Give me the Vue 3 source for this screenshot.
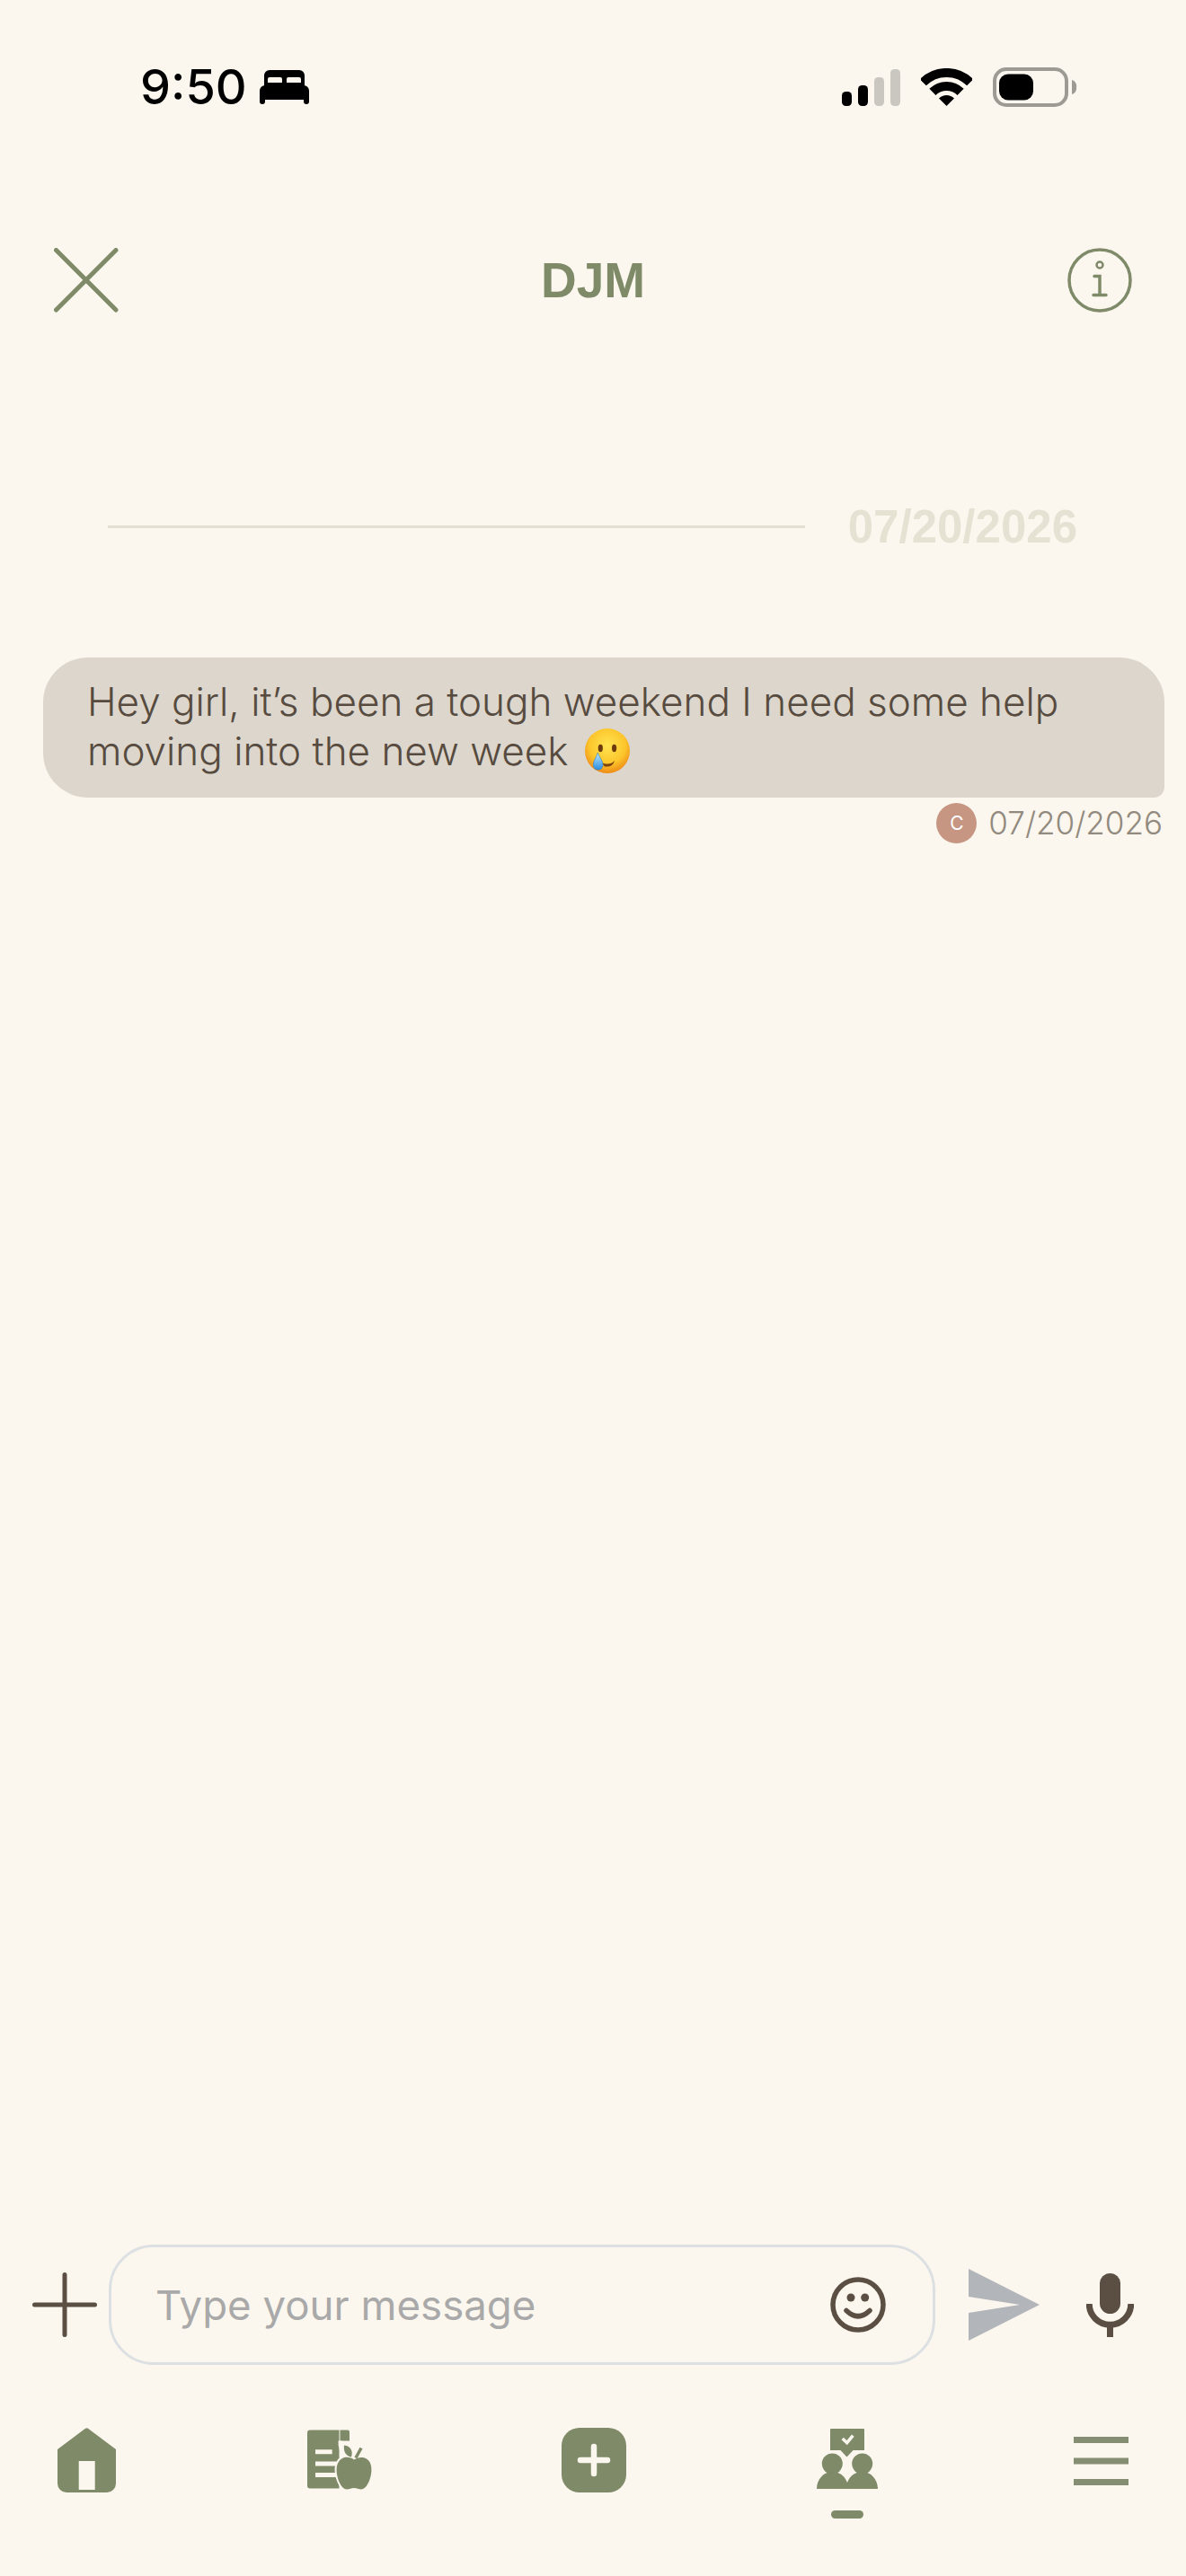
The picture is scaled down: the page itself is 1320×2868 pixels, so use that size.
<template>
  <div class="page">
    <div class="status">
      <div class="status-left">
        <span class="clock">9:50</span>
        <svg class="bed" width="55" height="38" viewBox="0 0 55 38">
          <path fill-rule="evenodd" d="M11 0H44a6 6 0 0 1 6 6V18H5V6a6 6 0 0 1 6-6ZM11 8a2 2 0 0 0-2 2v4H25V10a2 2 0 0 0-2-2ZM32 8a2 2 0 0 0-2 2v4H46V10a2 2 0 0 0-2-2Z" />
          <path d="M6 17H49a6 6 0 0 1 6 6V35a3 3 0 0 1-6 0V33H6v2a3 3 0 0 1-6 0V23a6 6 0 0 1 6-6Z" />
        </svg>
      </div>
      <div class="status-right">
        <svg width="65" height="42" viewBox="0 0 65 42">
          <rect x="0" y="26" width="11" height="16" rx="4.5" />
          <rect x="18" y="19" width="11" height="23" rx="4.5" />
          <rect x="36" y="10" width="11" height="32" rx="4.5" fill="#c9c7c0" />
          <rect x="54" y="1" width="11" height="41" rx="4.5" fill="#c9c7c0" />
        </svg>
        <svg width="57" height="43" viewBox="0 0 57 43">
          <path d="M2.3 15.8A37 37 0 0 1 54.7 15.8" fill="none" stroke="#000" stroke-width="10" />
          <path d="M12.9 26.4A22 22 0 0 1 44.1 26.4" fill="none" stroke="#000" stroke-width="10" />
          <path d="M28.5 42L20 33.5A12 12 0 0 1 37 33.5Z" />
        </svg>
        <svg class="battery" width="94" height="44" viewBox="0 0 94 44">
          <rect x="2" y="2" width="80" height="40" rx="13" fill="none" stroke="#9c9a92" stroke-width="4" />
          <rect x="7" y="7.5" width="38" height="29" rx="10" />
          <path d="M88 14a7 7 0 0 1 5 8 7 7 0 0 1-5 8Z" fill="#9c9a92" />
        </svg>
      </div>
    </div>

    <header class="header">
      <svg width="72" height="72" viewBox="0 0 72 72" fill="none" stroke="#7f8a69" stroke-width="5" stroke-linecap="round">
        <path d="M2.5 2.5L69 69M69 2.5L2.5 69" />
      </svg>
      <h1 class="title">DJM</h1>
      <svg width="72" height="72" viewBox="0 0 72 72" fill="none" stroke="#7f8a69" stroke-width="3.5">
        <circle cx="36" cy="36" r="34" />
        <circle cx="36" cy="19" r="3.5" stroke-width="2.5" />
        <path d="M30 31.5H36V52.5M29 52.5H43" stroke-linecap="round" />
      </svg>
    </header>

    <div class="date-row">
      <div class="date-line"></div>
      <span class="date-text">{{ date }}</span>
    </div>

    <main class="thread">
      <div class="bubble">
        {{ message }}
        <svg class="emoji" width="50" height="50" viewBox="0 0 50 50">
          <defs>
            <radialGradient id="face" cx="50%" cy="38%" r="62%">
              <stop offset="0" stop-color="#ffe552" />
              <stop offset="0.65" stop-color="#fcc52b" />
              <stop offset="1" stop-color="#ef8a16" />
            </radialGradient>
            <linearGradient id="tear" x1="0" y1="0" x2="0" y2="1">
              <stop offset="0" stop-color="#bfeaff" />
              <stop offset="1" stop-color="#2a8ee0" />
            </linearGradient>
          </defs>
          <circle cx="25" cy="25" r="25" fill="url(#face)" />
          <ellipse cx="17.3" cy="22" rx="2.6" ry="4.2" fill="#6e3c0c" />
          <ellipse cx="32.6" cy="22" rx="2.6" ry="4.2" fill="#6e3c0c" />
          <path d="M19 38.5Q28 41.5 33 36Q31 43.5 22 42.5Z" fill="#7a4310" />
          <path d="M14.3 27C12.5 33 9.3 35.5 9.3 41A5.4 5.8 0 0 0 20 41C20 35.5 16.2 33 14.3 27Z" fill="url(#tear)" stroke="#2a7fc9" stroke-width="0.6" />
        </svg>
      </div>
      <div class="meta">
        <span class="avatar">C</span>
        <span class="meta-date">{{ date }}</span>
      </div>
    </main>

    <div class="composer">
      <svg width="72" height="72" viewBox="0 0 72 72" fill="none" stroke="#5b4f43" stroke-width="5" stroke-linecap="round">
        <path d="M36 2.5V69.5M2.5 36H69.5" />
      </svg>
      <div class="input">
        <span class="placeholder">Type your message</span>
        <svg width="62" height="62" viewBox="0 0 62 62" fill="none" stroke="#5b4f43" stroke-width="5.5" stroke-linecap="round">
          <circle cx="31" cy="31" r="28" />
          <circle cx="23" cy="23" r="4.5" fill="#5b4f43" stroke="none" />
          <circle cx="38.7" cy="23" r="4.5" fill="#5b4f43" stroke="none" />
          <path d="M18 37.5Q31 50 44 37.5" />
        </svg>
      </div>
      <svg class="send" width="80" height="80" viewBox="0 0 80 80">
        <path d="M0 0L79 40L0 80V49L57 40L0 31Z" fill="#b2b5b9" />
      </svg>
      <svg class="mic" width="53" height="71" viewBox="0 0 53 71">
        <rect x="15" y="0" width="23" height="45" rx="11.5" fill="#5b4f43" />
        <path d="M3.25 34a23.25 23.25 0 0 0 46.5 0M26.5 57V71" fill="none" stroke="#5b4f43" stroke-width="7" />
      </svg>
    </div>

    <nav class="tabs">
      <div class="tab">
        <svg width="65" height="72" viewBox="0 0 65 72">
          <path d="M31 .8a2.5 2.5 0 0 1 3 0L65 24V62a10 10 0 0 1-10 10H10A10 10 0 0 1 0 62V24Z" fill="#7f8a69" />
          <rect x="23.7" y="37" width="18" height="32" fill="#fbf7ee" />
        </svg>
      </div>
      <div class="tab">
        <svg width="72" height="72" viewBox="0 0 72 67">
          <path d="M3 0H35.5V65H3a3 3 0 0 1-3-3V3a3 3 0 0 1 3-3Z" fill="#7f8a69" />
          <path d="M36.5 0H45a2 2 0 0 1 2 2V12H36.5Z" fill="#7f8a69" />
          <path d="M9 21.7H27.7V26.7H9ZM9 35H36V40H9ZM9 47.6H36V52.6H9Z" fill="#fbf7ee" />
          <path d="M36.5 12C36 20 39 26 44 30" fill="none" stroke="#fbf7ee" stroke-width="4" />
          <path d="M52 33C47 29 36 28 33 40C31 50 37 66 44 66C47 66 49 64.5 52 64.5C55 64.5 57 66 60 66C67 66 73 50 71 40C69 29 58 29 52 33Z" fill="#7f8a69" stroke="#fbf7ee" stroke-width="4" paint-order="stroke" />
          <path d="M41 17C49 18 51 24 49 30C43 29 40 24 41 17Z" fill="#7f8a69" />
          <path d="M60 20L54 31" stroke="#7f8a69" stroke-width="3.5" />
        </svg>
      </div>
      <div class="tab">
        <svg width="72" height="72" viewBox="0 0 72 72">
          <rect width="72" height="72" rx="20" fill="#7f8a69" />
          <path d="M36 21V51M21 36H51" stroke="#fbf7ee" stroke-width="6.5" stroke-linecap="round" />
        </svg>
      </div>
      <div class="tab active">
        <svg width="68" height="72" viewBox="0 0 68 72">
          <path d="M16 1H52a1 1 0 0 1 1 1V25H40.5L33.5 32.5L26.5 25H15V2a1 1 0 0 1 1-1Z" fill="#7f8a69" />
          <path d="M28.7 12L33.7 16.7L40.3 8.7" fill="none" stroke="#fbf7ee" stroke-width="3.5" />
          <circle cx="17.3" cy="40" r="11.5" fill="#7f8a69" />
          <circle cx="50.7" cy="40" r="11.5" fill="#7f8a69" />
          <path d="M0 68C0 57 8 49 17 49C25 49 31 53 34 61C37 53 43 49 51 49C60 49 68 57 68 68Z" fill="#7f8a69" />
        </svg>
        <span class="indicator"></span>
      </div>
      <div class="tab">
        <svg width="61" height="72" viewBox="0 0 61 72">
          <path d="M0 10H61V17H0ZM0 33.5H61V40.5H0ZM0 57H61V64H0Z" fill="#858e72" />
        </svg>
      </div>
    </nav>
  </div>
</template>

<script setup>
const date = '07/20/2026'
const message = 'Hey girl, it’s been a tough weekend I need some help moving into the new week'
</script>

<style>
html,
body {
  margin: 0;
  background: #fbf7ee;
}
</style>

<style scoped>
.page {
  display: flex;
  flex-direction: column;
  height: 2868px;
  background: #fbf7ee;
  font-family: Inter, "Liberation Sans", sans-serif;
  overflow: hidden;
}

svg {
  display: block;
  flex: none;
}

.status {
  display: flex;
  justify-content: space-between;
  align-items: center;
  height: 194px;
  padding: 0 121px 0 156px;
}

.status-left {
  display: flex;
  align-items: center;
  gap: 14px;
}

.clock {
  font-size: 54px;
  font-weight: 500;
  line-height: 60px;
  color: #000;
}

.status-right {
  display: flex;
  align-items: center;
  gap: 23px;
}

.header {
  display: flex;
  justify-content: space-between;
  align-items: center;
  height: 120px;
  margin-top: 58px;
  padding: 0 60px;
}

.title {
  margin: 0;
  font-family: "Liberation Sans", sans-serif;
  font-size: 55px;
  font-weight: 700;
  color: #7f8a69;
}

.date-row {
  display: flex;
  align-items: center;
  gap: 48px;
  height: 60px;
  margin-top: 184px;
  padding: 0 121px 0 120px;
}

.date-line {
  flex: 1;
  height: 3px;
  background: #e3dfd2;
}

.date-text {
  font-family: "Liberation Sans", sans-serif;
  font-size: 51px;
  font-weight: 700;
  color: #e6e2d3;
}

.thread {
  flex: 1;
  padding: 116px 24px 0 48px;
}

.bubble {
  padding: 22px 48px 24px 49px;
  border-radius: 50px 50px 12px 50px;
  background: #dcd6cc;
  font-size: 44px;
  font-weight: 350;
  line-height: 55px;
  color: #574b3f;
}

.emoji {
  display: inline-block;
  margin: -10px 0 -10px 6px;
  vertical-align: 1px;
}

.meta {
  display: flex;
  justify-content: flex-end;
  align-items: center;
  gap: 13px;
  margin-top: 6px;
  padding-right: 2px;
}

.avatar {
  display: flex;
  justify-content: center;
  align-items: center;
  width: 45px;
  height: 45px;
  border-radius: 50%;
  background: #c69682;
  font-size: 21px;
  color: #fff;
}

.meta-date {
  font-size: 35px;
  font-weight: 350;
  line-height: 45px;
  color: #928a7e;
}

.composer {
  display: flex;
  align-items: center;
  height: 134px;
  padding-left: 36px;
}

.input {
  display: flex;
  justify-content: space-between;
  align-items: center;
  box-sizing: border-box;
  width: 920px;
  height: 134px;
  margin-left: 13px;
  padding: 0 52px 0 49px;
  border: 3px solid #dde0e3;
  border-radius: 50px;
}

.placeholder {
  font-size: 45.6px;
  color: #a9a9a9;
}

.send {
  margin-left: 37px;
}

.mic {
  margin-left: 51px;
}

.tabs {
  display: flex;
  justify-content: space-between;
  height: 235px;
  box-sizing: border-box;
  padding: 70px 45px 0 46px;
}

.tab {
  display: flex;
  flex-direction: column;
  align-items: center;
  width: 100px;
}

.indicator {
  width: 36px;
  height: 9px;
  margin-top: 20px;
  border-radius: 5px;
  background: #7f8a69;
}
</style>
